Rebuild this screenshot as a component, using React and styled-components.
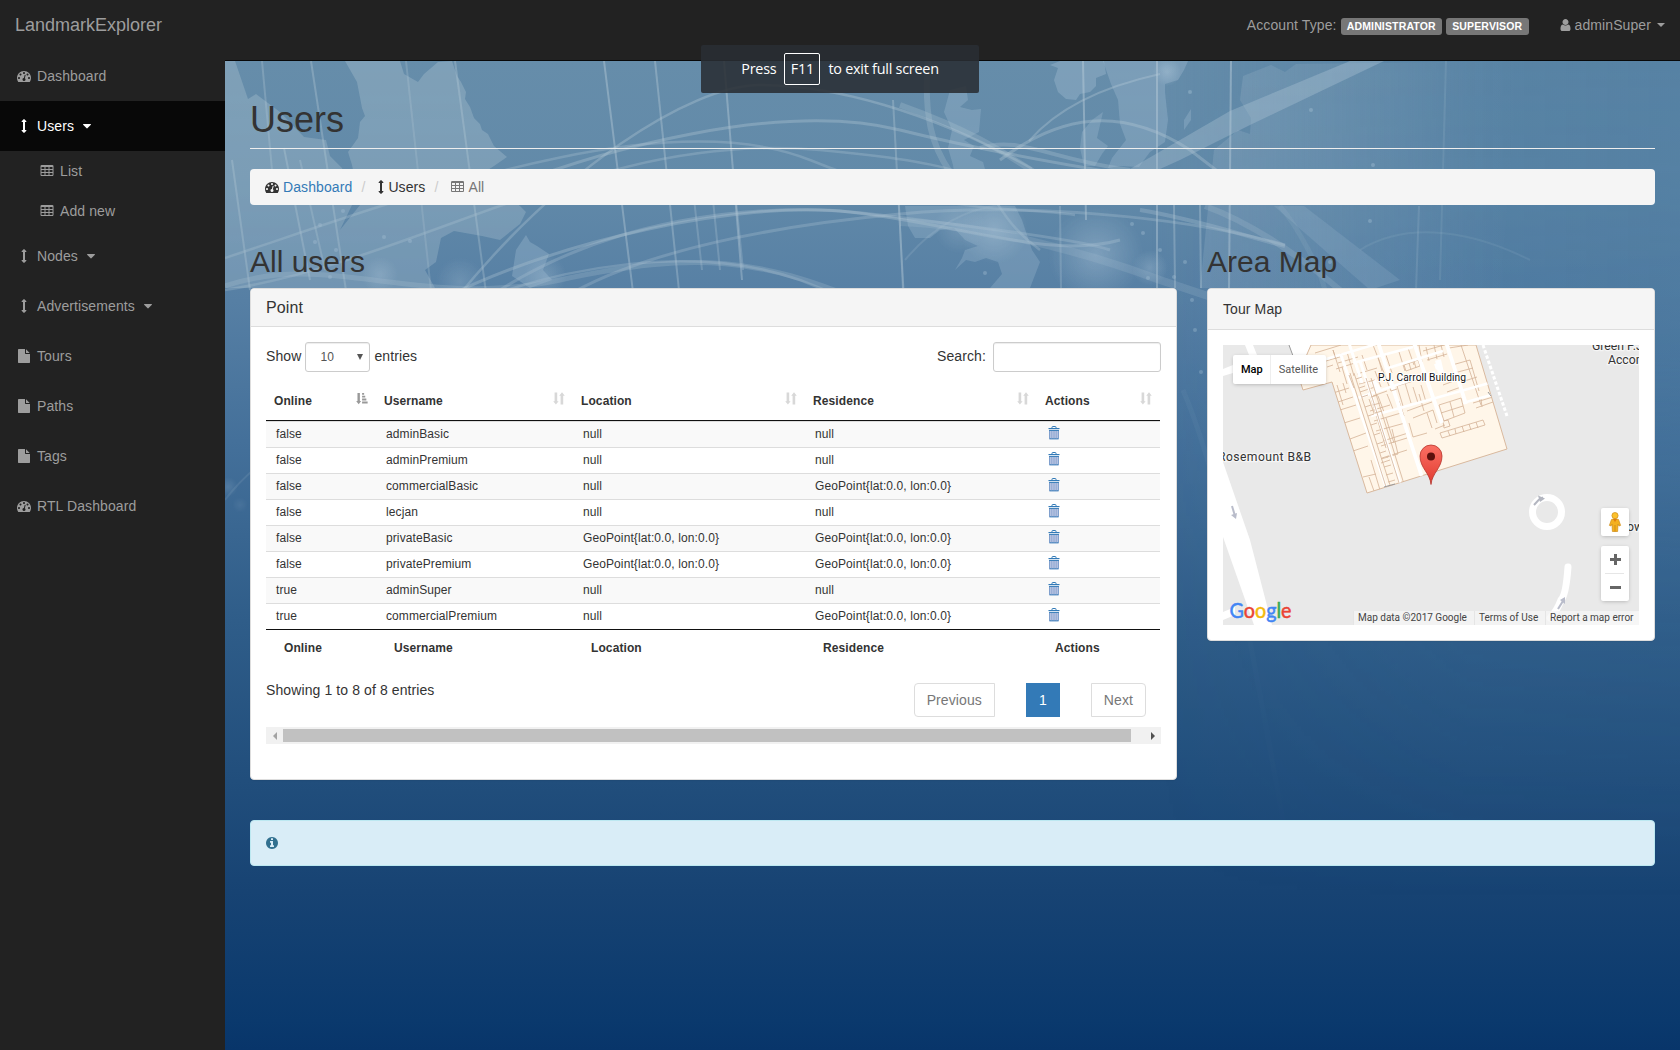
import React from "react";
import styled, { createGlobalStyle, css } from "styled-components";

const GlobalStyle = createGlobalStyle`
  * { box-sizing: border-box; }
  body {
    margin: 0;
    background: #222;
    color: #333;
    font: 14px/20px "Liberation Sans", Arial, sans-serif;
    letter-spacing: 0.1px;
  }
`;

/* ---------- icons ---------- */

const glyphs = {
  dashboard: "M384 1152q0-53-37.5-90.5t-90.5-37.5-90.5 37.5-37.5 90.5 37.5 90.5 90.5 37.5 90.5-37.5 37.5-90.5zm192-448q0-53-37.5-90.5t-90.5-37.5-90.5 37.5-37.5 90.5 37.5 90.5 90.5 37.5 90.5-37.5 37.5-90.5zm428 481l101-382q6-26-7.5-48.5t-38.5-29.5-48 6.5-30 39.5l-101 382q-60 5-107 43.5t-63 98.5q-20 77 20 146t117 89 146-20 89-117q16-60-6-117t-72-91zm660-33q0-53-37.5-90.5t-90.5-37.5-90.5 37.5-37.5 90.5 37.5 90.5 90.5 37.5 90.5-37.5 37.5-90.5zm-640-640q0-53-37.5-90.5t-90.5-37.5-90.5 37.5-37.5 90.5 37.5 90.5 90.5 37.5 90.5-37.5 37.5-90.5zm448 192q0-53-37.5-90.5t-90.5-37.5-90.5 37.5-37.5 90.5 37.5 90.5 90.5 37.5 90.5-37.5 37.5-90.5zm320 448q0 261-141 483-19 29-54 29h-1402q-35 0-54-29-141-221-141-483 0-182 71-348t191-286 286-191 348-71 348 71 286 191 191 286 71 348z",
  arrows: "M1216 320q0 26-19 45t-45 19h-128v1024h128q26 0 45 19t19 45-19 45l-256 256q-19 19-45 19t-45-19l-256-256q-19-19-19-45t19-45 45-19h128v-1024h-128q-26 0-45-19t-19-45 19-45l256-256q19-19 45-19t45 19l256 256q19 19 19 45z",
  file: "M1152 512v-472q22 14 36 28l408 408q14 14 28 36h-472zm-128 32q0 40 28 68t68 28h544v1056q0 40-28 68t-68 28h-1344q-40 0-68-28t-28-68v-1600q0-40 28-68t68-28h800v544z",
  user: "M1536 1399q0 109-62.5 187t-150.5 78h-854q-88 0-150.5-78t-62.5-187q0-85 8.5-160.5t31.5-152 58.5-131 94-89 134.5-34.5q131 128 313 128t313-128q76 0 134.5 34.5t94 89 58.5 131 31.5 152 8.5 160.5zm-256-887q0 159-112.5 271.5t-271.5 112.5-271.5-112.5-112.5-271.5 112.5-271.5 271.5-112.5 271.5 112.5 112.5 271.5z",
  caret: "M1408 704q0 26-19 45l-448 448q-19 19-45 19t-45-19l-448-448q-19-19-19-45t19-45 45-19h896q26 0 45 19t19 45z",
  table: "M576 1376v-192q0-14-9-23t-23-9h-320q-14 0-23 9t-9 23v192q0 14 9 23t23 9h320q14 0 23-9t9-23zm0-384v-192q0-14-9-23t-23-9h-320q-14 0-23 9t-9 23v192q0 14 9 23t23 9h320q14 0 23-9t9-23zm512 384v-192q0-14-9-23t-23-9h-320q-14 0-23 9t-9 23v192q0 14 9 23t23 9h320q14 0 23-9t9-23zm-512-768v-192q0-14-9-23t-23-9h-320q-14 0-23 9t-9 23v192q0 14 9 23t23 9h320q14 0 23-9t9-23zm512 384v-192q0-14-9-23t-23-9h-320q-14 0-23 9t-9 23v192q0 14 9 23t23 9h320q14 0 23-9t9-23zm512 384v-192q0-14-9-23t-23-9h-320q-14 0-23 9t-9 23v192q0 14 9 23t23 9h320q14 0 23-9t9-23zm-512-768v-192q0-14-9-23t-23-9h-320q-14 0-23 9t-9 23v192q0 14 9 23t23 9h320q14 0 23-9t9-23zm512 384v-192q0-14-9-23t-23-9h-320q-14 0-23 9t-9 23v192q0 14 9 23t23 9h320q14 0 23-9t9-23zm0-384v-192q0-14-9-23t-23-9h-320q-14 0-23 9t-9 23v192q0 14 9 23t23 9h320q14 0 23-9t9-23zm128-320v1088q0 66-47 113t-113 47h-1344q-66 0-113-47t-47-113v-1088q0-66 47-113t113-47h1344q66 0 113 47t47 113z",
  info: "M1152 1376v-160q0-14-9-23t-23-9h-96v-512q0-14-9-23t-23-9h-320q-14 0-23 9t-9 23v160q0 14 9 23t23 9h96v320h-96q-14 0-23 9t-9 23v160q0 14 9 23t23 9h448q14 0 23-9t9-23zm-128-896v-160q0-14-9-23t-23-9h-192q-14 0-23 9t-9 23v160q0 14 9 23t23 9h192q14 0 23-9t9-23zm640 416q0 209-103 385.5t-279.5 279.5-385.5 103-385.5-103-279.5-279.5-103-385.5 103-385.5 279.5-279.5 385.5-103 385.5 103 279.5 279.5 103 385.5z",
};

const GlyphSvg = styled.svg`
  display: block;
  flex: none;
  fill: currentColor;
  height: 14px;
  width: ${(p) => p.$w}px;
`;

// Icons sit in a 1792-unit square; `w` is the advance width in pixels at 14px.
function Glyph({ name, w = 14 }) {
  const units = w * 128;
  return (
    <GlyphSvg $w={w} viewBox={`${(1792 - units) / 2} 0 ${units} 1792`}>
      <path d={glyphs[name]} />
    </GlyphSvg>
  );
}

const CellSvg = styled.svg`
  display: block;
  flex: none;
`;

function TrashIcon() {
  return (
    <CellSvg width="12" height="14" viewBox="0 0 12 14">
      <path d="M4 2V1.2Q4 .5 4.7 .5H7.3Q8 .5 8 1.2V2" fill="none" stroke="#337ab7" />
      <rect x="0.5" y="2" width="11" height="1.1" fill="#337ab7" />
      <path d="M1.2 4.1H10.8V12.2Q10.8 13.2 9.8 13.2H2.2Q1.2 13.2 1.2 12.2Z" fill="#b4c2e0" />
      <path d="M1 4.4H11M1.3 12.8H10.7" stroke="#337ab7" />
      <path d="M1.5 5V12.5M10.5 5V12.5" stroke="#6f93c6" strokeWidth=".8" />
      <path d="M3.7 5V12.5M6 5V12.5M8.3 5V12.5" stroke="#8ba3d0" strokeWidth=".8" />
    </CellSvg>
  );
}

function SortBoth() {
  return (
    <CellSvg width="12" height="13" viewBox="0 0 12 13" fill="#d8d8d8">
      <path d="M1.6 .5H4.2V9.2H5.6L2.9 12.6L.2 9.2H1.6Z" />
      <path d="M7.6 12.6H10.2V3.8H11.8L9 .3L6.2 3.8H7.6Z" />
    </CellSvg>
  );
}

function SortAsc() {
  return (
    <CellSvg width="12" height="13" viewBox="0 0 13 13" fill="#999">
      <path d="M1.6 .5H4.2V9.2H5.6L2.9 12.6L.2 9.2H1.6Z" />
      <path d="M6.6 .6H8.8V2.4H6.6ZM6.6 3.5H10V5.4H6.6ZM6.6 6.5H11.2V8.6H6.6ZM6.6 9.7H12.6V12H6.6Z" />
    </CellSvg>
  );
}

/* ---------- shell ---------- */

const Shell = styled.div`
  display: flex;
  flex-direction: column;
  width: 1680px;
  height: 1050px;
  overflow: hidden;
  position: relative;
`;

const TopBar = styled.header`
  display: flex;
  justify-content: space-between;
  flex: none;
  height: 51px;
  background: #222;
  color: #9d9d9d;
`;

const Brand = styled.div`
  padding: 15px;
  font-size: 18px;
  letter-spacing: 0;
  line-height: 20px;
`;

const TopRight = styled.div`
  display: flex;
  align-items: flex-start;
  padding: 15px 15px 0 0;
`;

const Account = styled.div`
  display: flex;
  gap: 4px;
  margin-right: 31px;
`;

const Badge = styled.span`
  height: 17px;
  margin-top: 3px;
  padding: 0 6.2px;
  border-radius: 3px;
  background: #777;
  color: #fff;
  font-size: 10.5px;
  font-weight: bold;
  letter-spacing: 0.15px;
  line-height: 17px;
`;

const UserMenu = styled.div`
  display: flex;
  align-items: center;
  gap: 4px;
`;

const SmallCaret = styled.span`
  margin-left: 2px;
  border: 4px solid transparent;
  border-top-color: currentColor;
  border-bottom: 0;
`;

const Body = styled.div`
  display: flex;
  flex: 1;
`;

const Sidebar = styled.nav`
  flex: none;
  width: 225px;
  background: #222;
`;

const NavItem = styled.div`
  display: flex;
  align-items: center;
  gap: 4px;
  height: 50px;
  padding-left: 15px;
  color: #9d9d9d;
  ${(p) => p.$active && css`background: #080808; color: #fff;`}
  ${(p) => p.$sub && css`height: 40px; padding-left: 38px;`}
`;

const IconSlot = styled.span`
  display: flex;
  justify-content: center;
  width: 18px;
`;

const Main = styled.main`
  position: relative;
  flex: 1;
  margin-top: 9px;
  padding: 0 25px;
  border-top: 1px solid #080808;
  background: linear-gradient(
    #668daa 0, #628aa9 120px, #567fa4 240px, #44709a 380px, #2f5d89 560px,
    #214e7c 720px, #174373 830px, #0a396d 960px, #08356a 100%
  );
  box-shadow: 0 -9px 0 #222;
`;

const Backdrop = styled.svg`
  position: absolute;
  left: 0;
  top: 0;
`;

const Content = styled.div`
  position: relative;
`;

const PageTitle = styled.h1`
  margin: 0 0 20px;
  padding: 39px 0 8px;
  border-bottom: 1px solid #eee;
  font-size: 36px;
  font-weight: normal;
  letter-spacing: 0;
  line-height: 40px;
`;

const Crumbs = styled.ol`
  display: flex;
  align-items: center;
  height: 36px;
  margin: 0 0 40px;
  padding: 0 15px;
  border-radius: 4px;
  background: #f5f5f5;
  list-style: none;
`;

const Crumb = styled.li`
  display: flex;
  align-items: center;
  gap: 4px;
  color: ${(p) => (p.$muted ? "#777" : "#333")};
`;

const CrumbLink = styled.a`
  color: #337ab7;
`;

const Slash = styled.li`
  padding: 0 13px 0 9px;
  color: #ccc;
`;

const Columns = styled.div`
  display: grid;
  grid-template-columns: 927px 448px;
  gap: 30px;
  align-items: start;
`;

const SectionTitle = styled.h2`
  margin: 0 0 10px;
  font-size: 30px;
  font-weight: normal;
  letter-spacing: 0;
  line-height: 33px;
`;

const Panel = styled.section`
  height: ${(p) => p.$h}px;
  border: 1px solid #ddd;
  border-radius: 4px;
  background: #fff;
  box-shadow: 0 1px 1px rgba(0, 0, 0, 0.05);
`;

const PanelHead = styled.div`
  padding: ${(p) => (p.$large ? "9px 15px" : "10px 15px")};
  border-bottom: 1px solid #ddd;
  border-radius: 3px 3px 0 0;
  background: #f5f5f5;
  font-size: ${(p) => (p.$large ? 16 : 14)}px;
  line-height: ${(p) => (p.$large ? 19 : 20)}px;
`;

const PanelBody = styled.div`
  padding: 15px;
`;

/* ---------- table ---------- */

const Controls = styled.div`
  display: flex;
  justify-content: space-between;
  line-height: 30px;
`;

const Label = styled.label`
  display: flex;
  gap: ${(p) => p.$gap}px;
  height: 30px;
  line-height: 28px;
`;

const FieldBox = styled.span`
  display: flex;
  align-items: center;
  justify-content: space-between;
  width: ${(p) => p.$w}px;
  height: 30px;
  padding: 0 6px 0 14px;
  border: 1px solid #ccc;
  border-radius: 3px;
  color: #555;
  font-size: 12px;
  box-shadow: inset 0 1px 1px rgba(0, 0, 0, 0.075);
`;

const Triangle = styled.span`
  width: 0;
  border: ${(p) => p.$half || 3}px solid transparent;
  border-${(p) => p.$dir}: ${(p) => (p.$half ? 4 : 6)}px solid ${(p) => p.$c || "#555"};
  border-${(p) => ({ top: "bottom", left: "right", right: "left" })[p.$dir]}: 0;
`;

const Grid = styled.table`
  width: 894px;
  margin-top: 6px;
  border-spacing: 0;
  table-layout: fixed;
  font-size: 12px;
  line-height: 17px;
`;

const Th = styled.th`
  width: ${(p) => p.$w}px;
  padding: 15px 8px 10px;
  border-bottom: 1px solid #111;
  text-align: left;
`;

const ThInner = styled.div`
  display: flex;
  justify-content: space-between;
  height: 17px;
`;

const SortSlot = styled.span`
  margin-top: -1px;
`;

const Row = styled.tr`
  height: 26px;
  background: ${(p) => (p.$odd ? "#f9f9f9" : "#fff")};
`;

const Td = styled.td`
  padding: ${(p) => (p.$icon ? "4px 11px 7px" : "4px 10px 4px")};
  border-top: 1px solid #ddd;
`;

const FootTh = styled.th`
  padding: 10px 18px 6px;
  border-top: 1px solid #111;
  text-align: left;
`;

const TableFooter = styled.div`
  display: flex;
  justify-content: space-between;
  height: 47px;
  margin-top: 17px;
`;

const Pager = styled.div`
  display: flex;
  gap: 31px;
  margin: 3px 15px 0 0;
`;

const PageButton = styled.span`
  height: 34px;
  padding: 0 12px;
  border: 1px solid ${(p) => (p.$on ? "#337ab7" : "#ddd")};
  border-radius: ${(p) => p.$round || "0"};
  background: ${(p) => (p.$on ? "#337ab7" : "#fff")};
  color: ${(p) => (p.$on ? "#fff" : "#777")};
  line-height: 32px;
`;

const Scrollbar = styled.div`
  display: flex;
  align-items: center;
  height: 17px;
  background: #f1f1f1;
`;

const ScrollArrow = styled.span`
  display: flex;
  justify-content: center;
  width: 17px;
`;

const Thumb = styled.span`
  width: 848px;
  height: 13px;
  margin-right: 13px;
  background: #c1c1c1;
`;

const Alert = styled.div`
  display: flex;
  align-items: center;
  height: 46px;
  margin-top: 40px;
  padding-left: 14px;
  border: 1px solid #bce8f1;
  border-radius: 4px;
  background: #d9edf7;
  color: #31708f;
`;

/* ---------- map ---------- */

const MapBox = styled.div`
  position: relative;
  width: 416px;
  height: 280px;
  overflow: hidden;
  font-family: Roboto, sans-serif;
  letter-spacing: 0;
`;

const MapType = styled.div`
  position: absolute;
  left: 10px;
  top: 10px;
  display: flex;
  height: 29px;
  border-radius: 2px;
  background: #fff;
  box-shadow: 0 1px 4px -1px rgba(0, 0, 0, 0.3);
  color: #565656;
  font-size: 11px;
  line-height: 29px;
`;

const MapTypeItem = styled.span`
  padding: 0 8px;
  ${(p) => p.$on && css`border-right: 1px solid #eee; color: #000; font-weight: 500; padding-right: 7px;`}
`;

const MapButtons = styled.div`
  position: absolute;
  right: 10px;
  bottom: 24px;
  display: flex;
  flex-direction: column;
  gap: 10px;
`;

const MapButton = styled.div`
  display: flex;
  align-items: center;
  justify-content: center;
  width: 28px;
  height: ${(p) => p.$h}px;
  border-radius: 2px;
  background: #fff;
  box-shadow: 0 1px 4px -1px rgba(0, 0, 0, 0.3);
`;

const MapCredits = styled.div`
  position: absolute;
  right: 0;
  bottom: 0;
  display: flex;
  height: 14px;
  background: rgba(245, 245, 245, 0.75);
  color: #444;
  font-size: 10px;
  line-height: 14px;
  white-space: nowrap;
`;

const Credit = styled.span`
  width: ${(p) => p.$w}px;
  padding-left: 4px;
  border-left: 1px solid rgba(225, 225, 225, 0.8);
`;

/* ---------- full screen notice ---------- */

const Notice = styled.div`
  position: absolute;
  left: 701px;
  top: 45px;
  display: flex;
  align-items: center;
  justify-content: center;
  gap: 8px;
  width: 278px;
  height: 48px;
  border-radius: 2px;
  background: rgba(41, 45, 51, 0.88);
  color: #fff;
  font: 14.4px/20px "Open Sans", "Noto Sans", sans-serif;
  letter-spacing: -0.24px;
`;

const Key = styled.span`
  display: flex;
  align-items: center;
  justify-content: center;
  width: 36px;
  height: 32px;
  border: 1px solid #fff;
  border-radius: 2px;
`;

/* ---------- drawings ---------- */

function WorldBackdrop() {
  const verticals = [
    [262, 61, 272, 170, 0.3], [311, 61, 352, 330, 0.35], [406, 61, 432, 300, 0.25],
    [455, 61, 487, 300, 0.35], [604, 61, 634, 300, 0.45], [655, 61, 680, 300, 0.4],
    [724, 61, 742, 280, 0.45], [893, 100, 904, 300, 0.35], [232, 160, 250, 290, 0.35],
    [284, 148, 310, 280, 0.35], [300, 160, 325, 270, 0.3], [693, 190, 702, 270, 0.3],
    [712, 190, 720, 270, 0.3], [735, 190, 743, 270, 0.3], [899, 205, 903, 290, 0.3],
    [1083, 61, 1086, 220, 0.5], [1157, 61, 1157, 288, 0.5], [1174, 205, 1175, 288, 0.4],
    [1200, 205, 1201, 288, 0.4], [1231, 61, 1229, 288, 0.5], [1446, 61, 1440, 280, 0.15],
    [1419, 206, 1416, 290, 0.2], [1060, 206, 1061, 288, 0.3],
  ];
  const arcs = [
    ["M455 300C560 170 690 85 760 85S930 110 1034 170", 2.5, 0.35],
    ["M500 190C600 150 780 100 900 130S1110 170 1150 180", 3, 0.35],
    ["M225 258C400 200 660 100 810 160S1010 205 1075 215", 2.5, 0.3],
    ["M225 290C420 260 600 130 820 150S960 190 1040 250", 2.5, 0.3],
    ["M440 300C560 240 740 200 850 212S1050 260 1120 240", 3, 0.35],
    ["M470 310C600 215 760 200 880 215S1080 240 1110 250", 3, 0.3],
    ["M560 300C640 250 780 225 900 214S1180 215 1285 245", 3, 0.3],
    ["M225 286C330 250 420 310 560 280S760 260 860 300", 5, 0.25],
    ["M430 320C560 260 700 245 800 280L850 300", 2.5, 0.3],
    ["M1029 141C1060 105 1110 85 1160 74", 2, 0.35],
    ["M1000 160C1060 115 1120 105 1190 150L1216 170", 3, 0.35],
    ["M930 40C920 120 935 150 950 172", 6, 0.25],
    ["M900 105C970 130 1000 150 1031 170", 6, 0.25],
    ["M980 148C1020 135 1050 160 1130 170", 4, 0.3],
    ["M900 222C980 225 1080 250 1160 280L1220 300", 8, 0.2],
    ["M1140 210C1200 220 1240 235 1285 246", 4, 0.3],
    ["M1205 206C1260 226 1310 265 1340 290", 6, 0.22],
    ["M1280 206C1300 230 1320 270 1325 290", 5, 0.12],
    ["M1360 250C1400 225 1460 225 1530 260", 2, 0.12],
    ["M905 260C930 230 960 210 1000 205", 2, 0.2],
    ["M225 500C270 440 330 430 400 400", 2, 0.25],
    ["M1183 390C1230 500 1260 700 1285 830", 5, 0.08],
    ["M640 780C680 830 750 900 790 930", 12, 0.05],
  ];
  const spots = [
    [1167, 72, 14, 0.5], [994, 230, 34, 0.5], [1096, 255, 48, 0.5], [1150, 268, 18, 0.4],
    [380, 275, 18, 0.4], [545, 276, 22, 0.35], [228, 487, 10, 0.4], [240, 505, 8, 0.25],
    [960, 228, 26, 0.3], [460, 282, 25, 0.3],
  ];
  const dots = [
    [343, 211], [320, 225], [315, 242], [384, 237], [410, 241], [336, 250], [330, 277], [1143, 233],
    [1132, 224], [1160, 250], [1148, 278], [1185, 262], [1311, 110], [1373, 165], [1370, 221], [1330, 262],
    [1190, 92], [1250, 300], [1195, 330], [1201, 372], [1192, 300], [985, 273], [1174, 277],
  ];
  return (
    <Backdrop width="1455" height="989" viewBox="225 61 1455 989">
      <defs>
        <linearGradient id="fade" x1="0" y1="0" x2="0" y2="1">
          <stop offset="0" stopColor="#fff" />
          <stop offset=".3" stopColor="#fff" stopOpacity=".85" />
          <stop offset=".5" stopColor="#fff" stopOpacity=".3" />
          <stop offset=".85" stopColor="#fff" stopOpacity="0" />
        </linearGradient>
        <mask id="fadeMask">
          <rect x="225" y="61" width="1455" height="989" fill="url(#fade)" />
        </mask>
        <linearGradient id="east" x1="0" y1="0" x2="1" y2="0">
          <stop offset="0" stopColor="#40729b" stopOpacity="0" />
          <stop offset=".6" stopColor="#40729b" stopOpacity=".36" />
          <stop offset="1" stopColor="#40729b" stopOpacity=".4" />
        </linearGradient>
        <linearGradient id="asia" x1="0" y1="0" x2="1" y2="0">
          <stop offset="0" stopColor="#fff" stopOpacity=".11" />
          <stop offset="1" stopColor="#fff" stopOpacity="0" />
        </linearGradient>
        <radialGradient id="glow">
          <stop offset="0" stopColor="#a9c2d6" />
          <stop offset="1" stopColor="#a9c2d6" stopOpacity="0" />
        </radialGradient>
      </defs>
      <g mask="url(#fadeMask)">
        <rect x="1150" y="61" width="530" height="989" fill="url(#east)" />
        <path
          fill="#b4c8d6" fillOpacity=".33" fillRule="evenodd"
          d="M225 61H400L404 74L418 82L424 74L438 62L452 61L457 76L461 82L466 92L465 99L470 107L474 118L480 124L482 130L488 134L494 146L507 157L494 166L480 175L520 206L526 212L520 224L500 240L482 236L454 231L441 238L436 262L425 270L435 288H225Z
             M235 61L248 99L256 94L280 112L304 137L326 140L330 156L342 168L352 205L340 230L352 215L360 205L352 165L348 152L358 138L360 122L365 116L362 108L357 82L345 61Z"
        />
        <path fill="#a9c2d6" fillOpacity=".35" d="M526 235L530 242L537 246L549 254L543 270L552 280L530 288L512 276L516 250Z" />
        <path fill="#a9c2d6" fillOpacity=".35" d="M1050 65L1060 61H1104L1106 74L1096 78L1096 86L1090 92L1080 94L1076 100L1066 99L1058 92L1054 80L1058 68Z" />
        <path fill="#a9c2d6" fillOpacity=".32" d="M1103 61H1188L1184 70L1178 80L1165 84L1165 92L1168 120L1165 142L1150 152L1144 160L1139 167L1120 166L1108 168L1112 158L1126 140L1120 124L1118 100L1111 84Z" />
        <path fill="#a9c2d6" fillOpacity=".3" d="M1103 112L1097 138L1108 146L1102 154L1095 166L1084 166L1080 148L1082 132L1092 120Z" />
        <path fill="#a9c2d6" fillOpacity=".3" d="M1191 109L1191 120L1184 130L1184 120Z" />
        <path fill="#a9c2d6" fillOpacity=".3" d="M944 112L950 90L966 86L968 100L960 107L972 110L981 109L979 132L964 140L974 146L970 156L983 162L988 180H955L953 165L948 148L952 130Z" />
        <path fill="#a9c2d6" fillOpacity=".3" d="M905 206L1015 206L1022 220L1032 250L1040 262L1030 288H990L1002 274L998 262L986 258L975 262L966 260L955 270L962 258L965 250L978 246L965 240L954 228L940 230L930 238L915 238L908 226Z" />
        <path fill="url(#asia)" d="M1243 76L1271 65L1285 72L1296 64L1520 61L1500 288H1200L1214 150L1238 130L1250 134L1251 118L1240 100Z" />
        <path fill="#b6cad8" fillOpacity=".34" d="M1130 169L1230 111L1350 61H1384L1250 125L1180 160L1160 169Z" />
        <path fill="#a9c2d6" fillOpacity=".2" d="M1274 206L1304 206L1400 280L1370 290Z" />
        {verticals.map(([a, b, c, d, o], i) => (
          <line key={i} x1={a} y1={b} x2={c} y2={d} stroke="#b6cad8" strokeOpacity={o} strokeWidth="2" />
        ))}
        {arcs.map(([d, w, o], i) => (
          <path key={i} d={d} fill="none" stroke="#b6cad8" strokeWidth={w} strokeOpacity={o} />
        ))}
        {spots.map(([x, y, r, o], i) => (
          <circle key={i} cx={x} cy={y} r={r} fill="url(#glow)" opacity={o} />
        ))}
        {dots.map(([x, y], i) => (
          <circle key={i} cx={x} cy={y} r="2" fill="#a9c2d6" opacity=".4" />
        ))}
      </g>
    </Backdrop>
  );
}

function MapDrawing() {
  const outline = "M88 0H253L284 104L144 148L109 37L80 45L75 30Z";
  return (
    <CellSvg width="416" height="280" viewBox="0 0 416 280">
      <defs>
        <clipPath id="buildingClip"><path d={outline} /></clipPath>
        <linearGradient id="pinFill" x1="0" y1="0" x2="0" y2="1">
          <stop offset="0" stopColor="#fb7064" />
          <stop offset="1" stopColor="#e03a2f" />
        </linearGradient>
      </defs>
      <rect width="416" height="280" fill="#e9e9e9" />
      <g fill="#fff">
        <path d="M22 0H30L34 10H26ZM0 24L10 20V28L0 31Z" />
        <path d="M0 117L27 195L49 280H31L0 192ZM0 267L12 262V270L0 275Z" />
        <path d="M66 0H89L96 22L75 30Z" />
      </g>
      <path d="M66 0L70 11" stroke="#999" />
      <path d={outline} fill="#fff6e9" stroke="#d9b99e" />
      <g clipPath="url(#buildingClip)" fill="none" stroke="#d4b297" strokeWidth=".8">
        <path d="M117 65L133 60M121 78L137 73M127 94L143 88M130 106L145 101M140 132L153 129M146 132L151 146M110 48L126 43M115 57L130 52" />
        <path d="M136 39L152 35M137 47L152 42M143 36L163 103M150 51L164 46M147 66L167 60M150 0L168 46M163 10L169 28M176 7L182 26M155 12L159 26M185 3L191 20M196 0L199 17" />
        <path d="M146 54L152 71M155 51L161 67M164 49L170 64M151 76L178 68M153 86L182 78M158 101L184 93M163 73L171 98M176 56L181 71M160 96L185 88M164 112L175 109L169 84M159 113L184 105" />
        <path d="M174 41L180 61M182 38L188 58M190 42L195 58M198 40L203 57M174 41L200 33M184 66L209 57M190 73L210 65L214 78M196 49L201 66" />
        <path d="M200 6L221 0M204 15L224 9M203 2L206 16M211 0L214 14M218 0L221 12M181 20L195 15L197 21L183 26ZM186 18L188 25M191 16L193 23" />
        <path d="M216 60L238 53L242 68L221 76ZM227 57L231 72M218 68L240 61M220 40L236 34M224 47L238 42M229 20L247 15M231 28L250 23M235 38L254 32M226 3L245 0M238 0L258 60M247 15L256 46M250 58L270 52M253 63L270 57M258 54L259 62" />
        <path d="M217 88L260 75L262 80L219 93ZM225 86L227 91M232 84L233 89M239 81L241 87M246 79L248 85M253 77L255 83M220 76L225 75L227 81L221 83Z" />
        <path d="M92 8L118 0M96 18L120 11M110 5L113 14M119 22L124 39M115 18L135 12M148 115L157 145M158 118L167 115" />
        <path d="M118 8L124 28M124 7L131 31M113 24L135 17M139 10L144 25M134 29L154 23" />
      </g>
      <g clipPath="url(#buildingClip)" stroke="#fff" fill="none">
        <path d="M118 10L164 145M137 16L178 141M125 -5L139 38" strokeWidth="3" />
        <path d="M155 -3L199 132M190 -5L219 78M223 -3L243 59" strokeWidth="3.8" />
        <path d="M90 18L170 -6M132 54L212 27M148 71L270 37M240 58L268 50M130 18L190 2M162 24L220 6" strokeWidth="2.5" />
        <path d="M212 22L218 20M215 15L218 28M150 36L156 46" strokeWidth="6" />
      </g>
      <g clipPath="url(#buildingClip)" fill="none" stroke="#d4b297" strokeWidth=".8">
        <path d="M127 28L164 145M131 28L168 143M143 33L177 141M148 33L181 139M148 52L155 50M150 60L157 58M152 68L159 66M139 52L145 50M142 62L148 60M145 71L151 69M148 80L154 78M151 90L157 88M154 99L160 97M157 108L163 106M158 114L165 112M161 122L168 120M163 130L170 128M165 137L172 135M133 34L139 32M136 43L142 41" />
        <path d="M110 5L117 27M104 22L110 20M126 30L131 43M114 40L120 60M120 38L123 48M152 26L158 42M168 46L174 44M186 78L190 92L204 88M204 68L209 83M222 80L212 84" />
      </g>
      <path d="M161 142L172 139M265 47L268 51" stroke="#999" />
      <path d="M260 0L284 71" stroke="#fff" strokeWidth="3" strokeDasharray="3.5 2" />
      <circle cx="324" cy="167" r="14.5" fill="none" stroke="#fff" strokeWidth="7" />
      <path d="M311 160L316 154.5L320 152.5" stroke="#b3b6c0" strokeWidth="2" fill="none" />
      <path d="M315 150.5L322 153.5L317 157Z" fill="#b3b6c0" />
      <path d="M345 222Q343 250 338 255Q334 266 327 273" stroke="#fff" strokeWidth="7" strokeLinecap="round" fill="none" />
      <path d="M352 280L416 266V280Z" fill="#fff" opacity=".6" />
      <path d="M9 161L12 171" stroke="#b9bcca" strokeWidth="2" />
      <path d="M8 170L14 168L13 174Z" fill="#b9bcca" />
      <path d="M335 264L340 256" stroke="#b9bcca" strokeWidth="2" />
      <path d="M337 255L342 252V259Z" fill="#b9bcca" />
      <g fill="#333" stroke="#f5f5f5" strokeWidth="2.5" paintOrder="stroke" fontFamily="Roboto, sans-serif">
        <text x="155" y="35.5" fontSize="10.3" textLength="88" fill="#111" stroke="#fff" strokeWidth="2">P.J. Carroll Building</text>
        <text x="-5" y="116" fontSize="12.2" textLength="93">Rosemount B&amp;B</text>
        <text x="369" y="5" fontSize="12.2">Green P.J.</text>
        <text x="385" y="18.5" fontSize="12.2">Accommodation</text>
        <text x="396" y="186" fontSize="12.2">Down</text>
      </g>
      <path d="M208 139.5C207 128 197 123 197 111A11 11 0 0 1 219 111C219 123 209 128 208 139.5Z" fill="url(#pinFill)" stroke="#b5322b" strokeWidth=".8" />
      <circle cx="208" cy="111.5" r="4" fill="#5c100c" />
      <text x="6.5" y="272.8" fontFamily="Lato, sans-serif" fontSize="21" textLength="62" lengthAdjust="spacingAndGlyphs" strokeWidth=".5">
        <tspan fill="#4285f4" stroke="#4285f4">G</tspan><tspan fill="#ea4335" stroke="#ea4335">o</tspan><tspan fill="#f4b90b" stroke="#f4b90b">o</tspan><tspan fill="#4285f4" stroke="#4285f4">g</tspan><tspan fill="#34a853" stroke="#34a853">l</tspan><tspan fill="#ea4335" stroke="#ea4335">e</tspan>
      </text>
    </CellSvg>
  );
}

function Pegman() {
  return (
    <CellSvg width="14" height="20" viewBox="0 0 14 20">
      <path d="M3.5 7.5Q7 5.8 10.5 7.5L12.6 13.4L11 14L10 12L9.6 19.5H4.4L4 12L3 14L1.4 13.4Z" fill="#f3b01f" stroke="#cf8d18" strokeWidth=".7" />
      <path d="M5 7L7 10L9 7Z" fill="#e07a10" />
      <path d="M7 13V19.5" stroke="#cf8d18" />
      <circle cx="7" cy="3.6" r="3.1" fill="#fbc12c" stroke="#cf8d18" strokeWidth=".7" />
    </CellSvg>
  );
}

/* ---------- data ---------- */

const nav = [
  { icon: "dashboard", text: "Dashboard" },
  { icon: "arrows", text: "Users", caret: true, active: true },
  { icon: "table", text: "List", sub: true },
  { icon: "table", text: "Add new", sub: true },
  { icon: "arrows", text: "Nodes", caret: true },
  { icon: "arrows", text: "Advertisements", caret: true },
  { icon: "file", text: "Tours" },
  { icon: "file", text: "Paths" },
  { icon: "file", text: "Tags" },
  { icon: "dashboard", text: "RTL Dashboard" },
];

const columns = [["Online", 110], ["Username", 197], ["Location", 232], ["Residence", 232], ["Actions", 123]];
const geo = "GeoPoint{lat:0.0, lon:0.0}";
const users = [
  ["false", "adminBasic", "null", "null"],
  ["false", "adminPremium", "null", "null"],
  ["false", "commercialBasic", "null", geo],
  ["false", "lecjan", "null", "null"],
  ["false", "privateBasic", geo, geo],
  ["false", "privatePremium", geo, geo],
  ["true", "adminSuper", "null", "null"],
  ["true", "commercialPremium", "null", geo],
];

function UsersTable() {
  return (
    <Grid>
      <thead>
        <tr>
          {columns.map(([name, w], i) => (
            <Th key={name} $w={w}>
              <ThInner>{name}<SortSlot>{i === 0 ? <SortAsc /> : <SortBoth />}</SortSlot></ThInner>
            </Th>
          ))}
        </tr>
      </thead>
      <tbody>
        {users.map((user, i) => (
          <Row key={user[1]} $odd={i % 2 === 0}>
            {user.map((value, j) => <Td key={j}>{value}</Td>)}
            <Td $icon><TrashIcon /></Td>
          </Row>
        ))}
      </tbody>
      <tfoot>
        <tr>{columns.map(([name]) => <FootTh key={name}>{name}</FootTh>)}</tr>
      </tfoot>
    </Grid>
  );
}

export default function App() {
  return (
    <Shell>
      <GlobalStyle />
      <TopBar>
        <Brand>LandmarkExplorer</Brand>
        <TopRight>
          <Account>
            Account Type:
            <Badge>ADMINISTRATOR</Badge>
            <Badge>SUPERVISOR</Badge>
          </Account>
          <UserMenu>
            <Glyph name="user" w={11} />
            adminSuper
            <SmallCaret />
          </UserMenu>
        </TopRight>
      </TopBar>
      <Body>
        <Sidebar>
          {nav.map((item) => (
            <NavItem key={item.text} $active={item.active} $sub={item.sub}>
              <IconSlot><Glyph name={item.icon} /></IconSlot>
              {item.text}
              {item.caret && <IconSlot><Glyph name="caret" /></IconSlot>}
            </NavItem>
          ))}
        </Sidebar>
        <Main>
          <WorldBackdrop />
          <Content>
            <PageTitle>Users</PageTitle>
            <Crumbs>
              <Crumb><Glyph name="dashboard" /><CrumbLink>Dashboard</CrumbLink></Crumb>
              <Slash>/</Slash>
              <Crumb><Glyph name="arrows" w={6} />Users</Crumb>
              <Slash>/</Slash>
              <Crumb $muted><Glyph name="table" w={13} />All</Crumb>
            </Crumbs>
            <Columns>
              <div>
                <SectionTitle>All users</SectionTitle>
                <Panel $h={492}>
                  <PanelHead $large>Point</PanelHead>
                  <PanelBody>
                    <Controls>
                      <Label $gap={4}>Show <FieldBox $w={65}>10<Triangle $dir="top" /></FieldBox> entries</Label>
                      <Label $gap={7}>Search: <FieldBox $w={168} /></Label>
                    </Controls>
                    <UsersTable />
                    <TableFooter>
                      <span>Showing 1 to 8 of 8 entries</span>
                      <Pager>
                        <PageButton $round="4px 0 0 4px">Previous</PageButton>
                        <PageButton $on>1</PageButton>
                        <PageButton $round="0 4px 4px 0">Next</PageButton>
                      </Pager>
                    </TableFooter>
                    <Scrollbar>
                      <ScrollArrow><Triangle $dir="right" $half={4} $c="#a3a3a3" /></ScrollArrow>
                      <Thumb />
                      <ScrollArrow><Triangle $dir="left" $half={4} $c="#505050" /></ScrollArrow>
                    </Scrollbar>
                  </PanelBody>
                </Panel>
              </div>
              <div>
                <SectionTitle>Area Map</SectionTitle>
                <Panel $h={353}>
                  <PanelHead>Tour Map</PanelHead>
                  <PanelBody>
                    <MapBox>
                      <MapDrawing />
                      <MapType>
                        <MapTypeItem $on>Map</MapTypeItem>
                        <MapTypeItem>Satellite</MapTypeItem>
                      </MapType>
                      <MapButtons>
                        <MapButton $h={28}><Pegman /></MapButton>
                        <MapButton $h={55}>
                          <CellSvg width="20" height="55" viewBox="0 0 20 55">
                            <path d="M5 13.5H16M10.5 8V19M5 41.5H16" stroke="#666" strokeWidth="3" />
                            <path d="M0 27.5H19" stroke="#e6e6e6" />
                          </CellSvg>
                        </MapButton>
                      </MapButtons>
                      <MapCredits>
                        <Credit $w={121}>Map data ©2017 Google</Credit>
                        <Credit $w={71}>Terms of Use</Credit>
                        <Credit $w={94}>Report a map error</Credit>
                      </MapCredits>
                    </MapBox>
                  </PanelBody>
                </Panel>
              </div>
            </Columns>
            <Alert><Glyph name="info" /></Alert>
          </Content>
        </Main>
      </Body>
      <Notice>
        Press <Key>F11</Key> to exit full screen
      </Notice>
    </Shell>
  );
}
